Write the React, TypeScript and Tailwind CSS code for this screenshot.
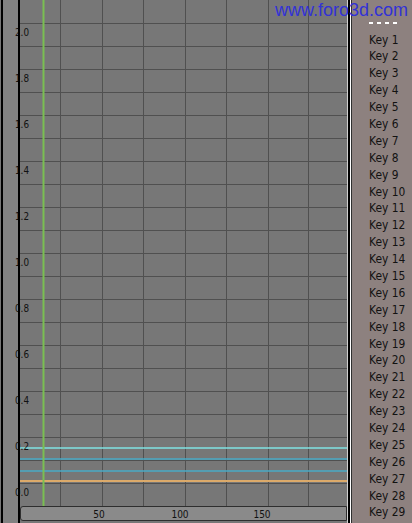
import React from "react";

const hLines = Array.from({ length: 21 }, (_, i) => 23 * (i + 1));
const vLines = [40, 82, 123, 165, 206, 248, 288];
const yLabels = ["2.0", "1.8", "1.6", "1.4", "1.2", "1.0", "0.8", "0.6", "0.4", "0.2", "0.0"];
const yTops = [
  "top-[26px]", "top-[72px]", "top-[118px]", "top-[164px]", "top-[210px]", "top-[256px]",
  "top-[302px]", "top-[348px]", "top-[394px]", "top-[440px]", "top-[486px]",
];
const keys = Array.from({ length: 29 }, (_, i) => `Key ${i + 1}`);

export default function App() {
  return (
    <div className="relative w-[412px] h-[523px] flex overflow-hidden bg-[#777777] font-['DejaVu_Sans',sans-serif]">
      {/* left vertical scroller */}
      <div className="w-[20px] h-full flex shrink-0">
        <div className="w-px bg-[#777777]" />
        <div className="w-[2px] bg-black" />
        <div className="flex-1 bg-[#828282]" />
        <div className="w-[2px] bg-black relative z-10" />
      </div>

      {/* graph column */}
      <div className="w-[327px] h-full flex flex-col shrink-0">
        <div className="relative h-[506px] bg-[#777777]">
          <svg width="327" height="506" className="absolute inset-0">
            {hLines.map((y) => (
              <line key={"h" + y} x1="0" x2="327" y1={y + 0.5} y2={y + 0.5} stroke="#505050" strokeWidth="1" />
            ))}
            {vLines.map((x) => (
              <line key={"v" + x} x1={x + 0.5} x2={x + 0.5} y1="0" y2="506" stroke="#505050" strokeWidth="1" />
            ))}
            <line x1="0" x2="327" y1="448" y2="448" stroke="#7fe2e2" strokeWidth="1.6" />
            <line x1="0" x2="327" y1="459" y2="459" stroke="#48aac6" strokeWidth="1.5" />
            <line x1="0" x2="327" y1="471" y2="471" stroke="#48aac6" strokeWidth="1.5" />
            <line x1="0" x2="327" y1="481" y2="481" stroke="#dcaa6a" strokeWidth="2" />
            <rect x="22.5" y="0" width="2" height="506" fill="#7abf52" />
          </svg>
        </div>
        <div className="h-[17px] bg-[#777777] pb-[2px]">
          <div className="relative h-[15px] border border-[#2e2e2e] bg-[#8a8a8a] rounded-l-[3px]">
            <div className="absolute top-[2px] left-[63px] w-[30px] text-center text-[10px] leading-[12px] text-[#111] scale-x-[0.9]">50</div>
            <div className="absolute top-[2px] left-[144px] w-[30px] text-center text-[10px] leading-[12px] text-[#111] scale-x-[0.9]">100</div>
            <div className="absolute top-[2px] left-[226px] w-[30px] text-center text-[10px] leading-[12px] text-[#111] scale-x-[0.9]">150</div>
          </div>
        </div>
      </div>

      {/* separator */}
      <div className="w-px h-full bg-[#cfcfcf] shrink-0" />
      <div className="w-[2px] h-full bg-black shrink-0" />
      <div className="w-px h-full bg-white shrink-0" />
      <div className="w-px h-full bg-[#303030] shrink-0" />

      {/* channel list */}
      <div className="flex-1 h-full bg-[#8d817f] flex flex-col pt-[22px] pl-[17px]">
        <div className="flex gap-[4px] h-[2px]">
          <div className="w-[4px] bg-white" />
          <div className="w-[4px] bg-white" />
          <div className="w-[4px] bg-white" />
          <div className="w-[4px] bg-white" />
        </div>
        <div className="mt-[7.5px] flex flex-col">
          {keys.map((k) => (
            <div key={k} className="h-[16.9px] leading-[16.9px] text-[13px] text-[#121212] whitespace-nowrap origin-left scale-x-[0.82]">
              {k}
            </div>
          ))}
        </div>
      </div>

      {/* y axis labels */}
      {yLabels.map((l, i) => (
        <div key={l} className={`absolute left-[15px] ${yTops[i]} text-[10.5px] leading-[12px] text-[#111] origin-left scale-x-[0.84]`}>
          {l}
        </div>
      ))}

      {/* watermark */}
      <div className="absolute top-[1px] left-[275px] z-20 text-[18px] leading-[18px] text-[#3232d6] whitespace-nowrap font-['Liberation_Sans',Arial,sans-serif]">
        www.foro3d.com
      </div>
    </div>
  );
}
